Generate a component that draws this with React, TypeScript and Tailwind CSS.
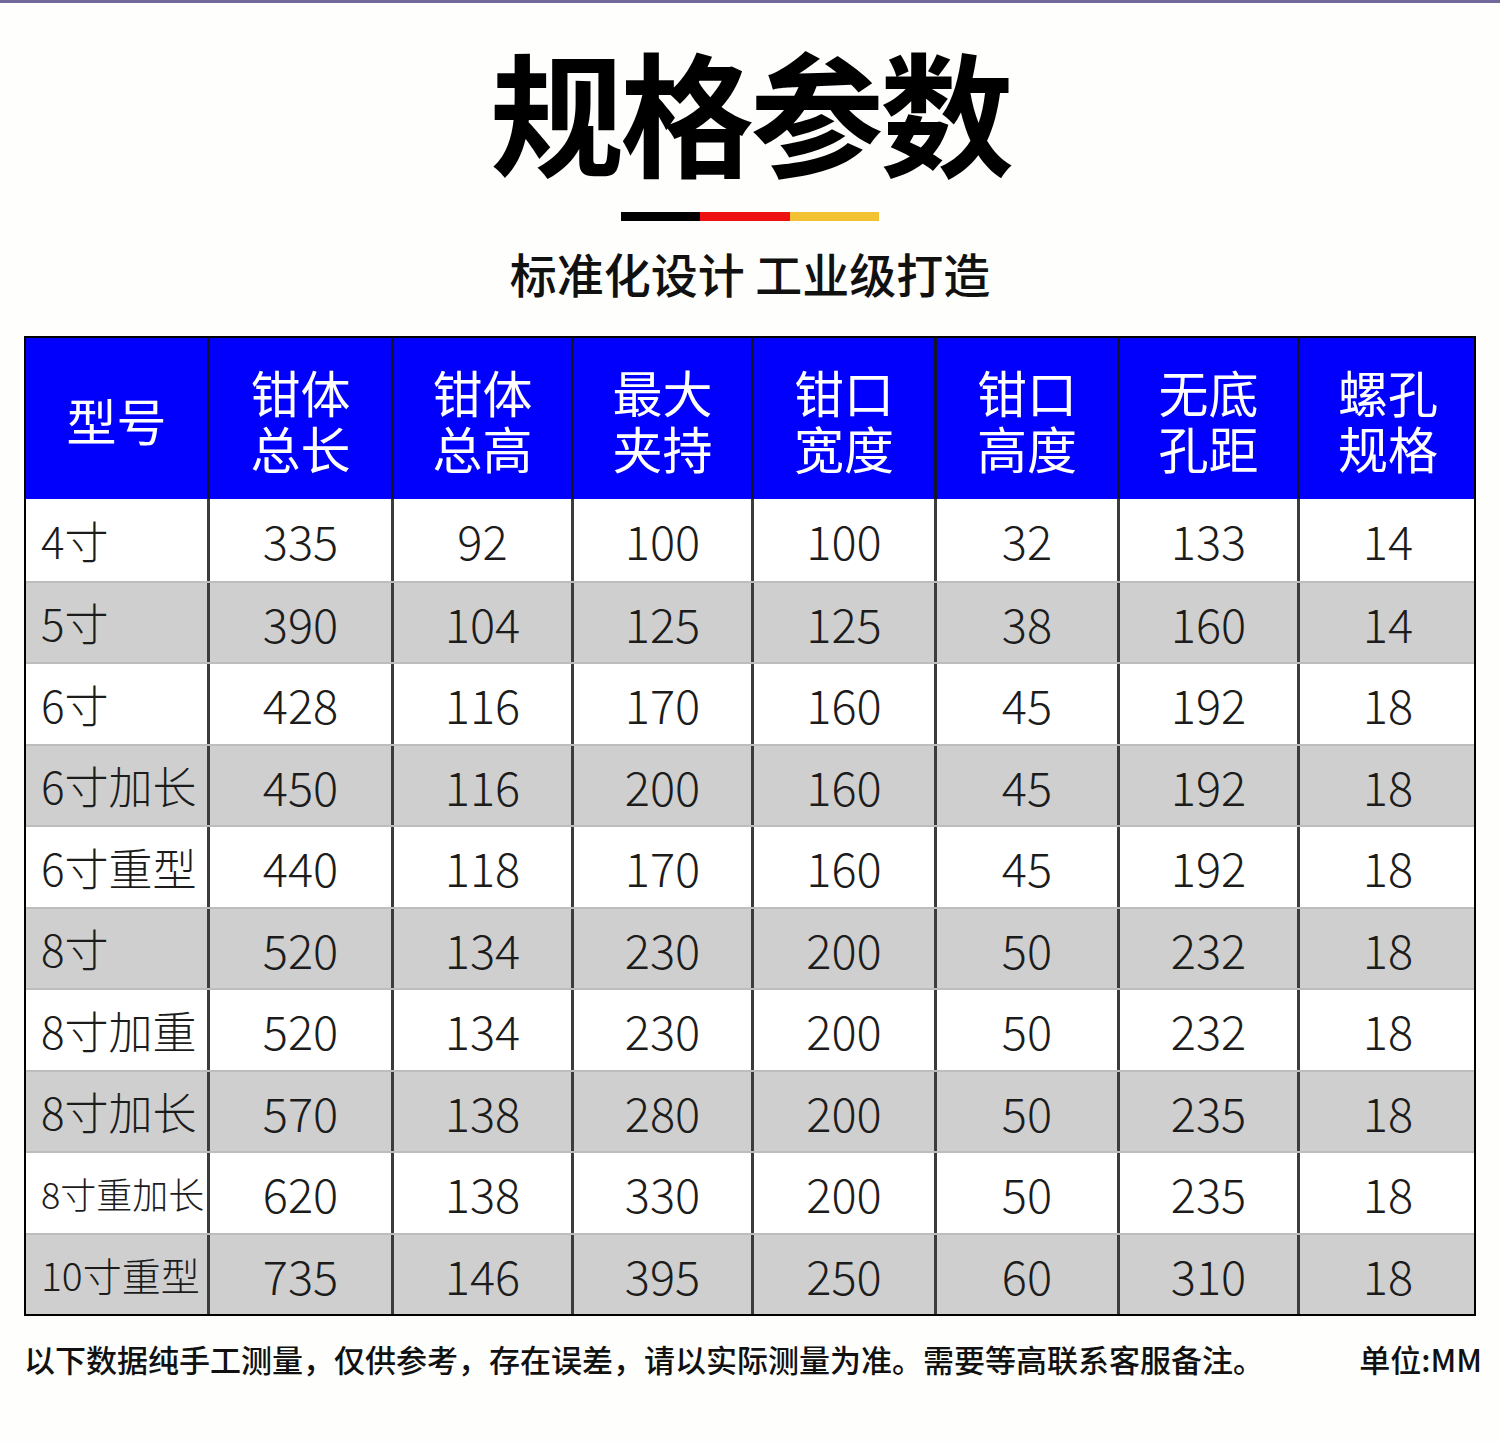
const headers = [
  "型号",
  "钳体\n总长",
  "钳体\n总高",
  "最大\n夹持",
  "钳口\n宽度",
  "钳口\n高度",
  "无底\n孔距",
  "螺孔\n规格",
];

const rows: { model: string; size: string; values: string[] }[] = [
  { model: "4寸", size: "text-[44px]", values: ["335", "92", "100", "100", "32", "133", "14"] },
  { model: "5寸", size: "text-[44px]", values: ["390", "104", "125", "125", "38", "160", "14"] },
  { model: "6寸", size: "text-[44px]", values: ["428", "116", "170", "160", "45", "192", "18"] },
  { model: "6寸加长", size: "text-[44px]", values: ["450", "116", "200", "160", "45", "192", "18"] },
  { model: "6寸重型", size: "text-[44px]", values: ["440", "118", "170", "160", "45", "192", "18"] },
  { model: "8寸", size: "text-[44px]", values: ["520", "134", "230", "200", "50", "232", "18"] },
  { model: "8寸加重", size: "text-[44px]", values: ["520", "134", "230", "200", "50", "232", "18"] },
  { model: "8寸加长", size: "text-[44px]", values: ["570", "138", "280", "200", "50", "235", "18"] },
  { model: "8寸重加长", size: "text-[36px]", values: ["620", "138", "330", "200", "50", "235", "18"] },
  { model: "10寸重型", size: "text-[39px]", values: ["735", "146", "395", "250", "60", "310", "18"] },
];

const cols = "grid grid-cols-[181px_184px_180px_180px_183px_183px_180px_179px]";
const font = { fontFamily: '"Noto Sans CJK SC", "Noto Sans", sans-serif' };

export default function App() {
  return (
    <div className="w-[1500px] h-[1442px] bg-[#fefefc] flex flex-col" style={font}>
      {/* top strip */}
      <div className="h-[3px] bg-[#6f6a9a]" />

      {/* Title */}
      <div className="flex flex-col items-center">
        <h1 className="mt-[39px] text-[134px] leading-none font-bold text-black tracking-[-4px]">
          规格参数
        </h1>
        <div className="mt-[36px] flex h-[9px]">
          <div className="w-[79px] bg-black" />
          <div className="w-[90px] bg-[#ee1111]" />
          <div className="w-[89px] bg-[#f3c232]" />
        </div>
        <p className="mt-[28px] text-[47px] leading-none font-medium text-[#111]">
          标准化设计 工业级打造
        </p>
      </div>

      {/* Table */}
      <div className="mt-[40px] ml-[24px] w-[1452px] border-2 border-black">
        <div className={`${cols} h-[161px] bg-[#0000fc] text-white`}>
          {headers.map((h, i) => (
            <div
              key={i}
              className={`flex items-center justify-center text-center whitespace-pre-line text-[50px] leading-[56px] ${
                i > 0 ? "border-l-[3px] border-[#141428]" : ""
              }`}
            >
              {h}
            </div>
          ))}
        </div>

        {rows.map((row, r) => (
          <div
            key={r}
            className={`${cols} h-[81.5px] text-[#1c1c1c] font-light ${r % 2 === 1 ? "bg-[#cfcfcf]" : "bg-white"} ${
              r > 0 ? "border-t-2 border-[#bdbdbd]" : ""
            }`}
          >
            <div className={`flex items-center pl-[15px] ${row.size} leading-none whitespace-nowrap`}>
              {row.model}
            </div>
            {row.values.map((v, i) => (
              <div
                key={i}
                className="flex items-center justify-center border-l-[3px] border-[#3c3c3c] text-[47px] leading-none"
              >
                {v}
              </div>
            ))}
          </div>
        ))}
      </div>

      {/* Footer note */}
      <div className="mt-[27px] pl-[24px] pr-[18px] flex justify-between items-center text-[31px] leading-none font-medium text-[#111]">
        <span>以下数据纯手工测量，仅供参考，存在误差，请以实际测量为准。需要等高联系客服备注。</span>
        <span>单位:MM</span>
      </div>
    </div>
  );
}
